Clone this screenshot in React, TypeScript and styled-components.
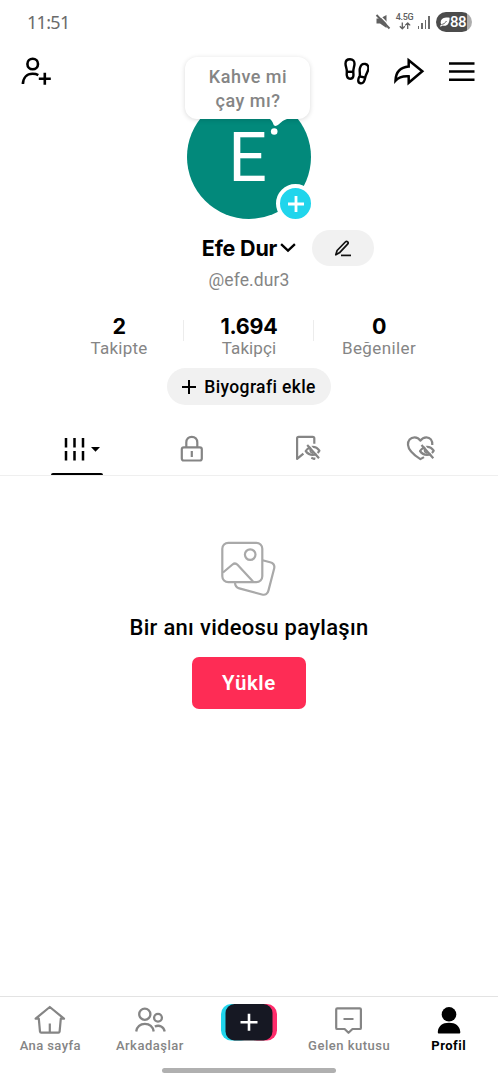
import React from "react";
import styled, { createGlobalStyle } from "styled-components";

const Global = createGlobalStyle`
  * { box-sizing: border-box; }
  body { margin: 0; background: #fff; }
  button { border: 0; padding: 0; font: inherit; color: inherit; background: none; }
  svg { display: block; flex: none; }
`;

const Screen = styled.div`
  width: 498px;
  height: 1080px;
  display: flex;
  flex-direction: column;
  background: #fff;
  color: #000;
  font-family: Roboto, "Noto Sans", sans-serif;
  overflow: hidden;
`;

const Label = styled.span<{ $size: number; $weight?: number; $color?: string; $track?: number; $line?: number }>`
  display: block;
  white-space: nowrap;
  font-size: ${(p) => p.$size}px;
  font-weight: ${(p) => p.$weight ?? 400};
  color: ${(p) => p.$color ?? "#000"};
  letter-spacing: ${(p) => p.$track ?? 0}px;
  line-height: ${(p) => p.$line ?? 24}px;
`;

const Strong = styled(Label)`
  font-family: Inter, Roboto, sans-serif;
`;

const StatusBar = styled.header`
  height: 44px;
  padding: 0 26px 1px 27px;
  display: flex;
  align-items: center;
  justify-content: space-between;
`;

const Clock = styled(Label)`
  font-family: "Noto Sans", sans-serif;
`;

const StatusIcons = styled.div`
  display: flex;
  align-items: center;
`;

const Network = styled.div`
  width: 18px;
  margin-left: 5px;
  display: flex;
  flex-direction: column;
  align-items: center;
`;

const Signal = styled.div`
  height: 13px;
  margin: 1px 0 0 4px;
  display: flex;
  align-items: flex-end;
  gap: 2px;
`;

const SignalBar = styled.i<{ $h: number }>`
  width: 1.6px;
  height: ${(p) => p.$h}px;
  background: #6b6b6b;
`;

const Battery = styled.div`
  width: 36px;
  height: 20px;
  margin-left: 6px;
  padding-left: 4px;
  display: flex;
  align-items: center;
  border-radius: 10px;
  background: linear-gradient(90deg, #4c4c4c 31px, #adadad 31px);
`;

const TopBar = styled.nav`
  height: 51px;
  padding: 4px 23px 0 21px;
  display: flex;
  align-items: center;
`;

const TopActions = styled.div`
  margin-left: auto;
  display: flex;
  align-items: center;
  gap: 24px;
`;

const Avatar = styled.div`
  position: relative;
  width: 124px;
  height: 124px;
  margin: 0 auto;
  border-radius: 50%;
  background: #02897b;
  display: flex;
  align-items: center;
  justify-content: center;
`;

const Initial = styled(Label)`
  padding: 1px 3px 0 0;
`;

const Bubble = styled.div`
  position: absolute;
  left: -2px;
  top: -38px;
  width: 125px;
  height: 62px;
  padding: 8px 0 0 1px;
  border-radius: 12px;
  background: #fff;
  text-align: center;
  box-shadow: 0 1px 5px rgba(0, 0, 0, 0.15);
`;

const BubbleTail = styled.svg`
  position: absolute;
  left: 80px;
  top: 24px;
`;

const AddBadge = styled.button`
  position: absolute;
  left: 89px;
  top: 89px;
  width: 39px;
  height: 39px;
  border: 4px solid #fff;
  border-radius: 50%;
  background: #20d5ec;
  display: flex;
  align-items: center;
  justify-content: center;
`;

const NameRow = styled.div`
  height: 36px;
  margin-top: 11px;
  display: grid;
  grid-template-columns: 1fr auto 1fr;
  align-items: center;
`;

const Name = styled.button`
  grid-column: 2;
  display: flex;
  align-items: center;
  gap: 3px;
`;

const Pill = styled.button<{ $w: number; $h: number }>`
  width: ${(p) => p.$w}px;
  height: ${(p) => p.$h}px;
  border-radius: 19px;
  background: #f1f1f1;
  display: flex;
  align-items: center;
  justify-content: center;
  gap: 8px;
`;

const EditPill = styled(Pill)`
  margin-left: 16px;
`;

const Handle = styled.div`
  height: 28px;
  display: flex;
  align-items: center;
  justify-content: center;
`;

const Stats = styled.div`
  height: 46px;
  margin-top: 20px;
  display: flex;
  justify-content: center;
`;

const Stat = styled.div`
  position: relative;
  width: 130px;
  display: flex;
  flex-direction: column;
  align-items: center;
  & + &::before {
    content: "";
    position: absolute;
    left: -1px;
    top: 6px;
    width: 1px;
    height: 21px;
    background: #ececec;
  }
`;

const BioRow = styled.div`
  margin-top: 8px;
  display: flex;
  justify-content: center;
`;

const Tabs = styled.div`
  height: 57px;
  margin-top: 14px;
  padding: 0 20px;
  border-bottom: 1px solid #efefef;
  display: grid;
  grid-template-columns: repeat(4, 1fr);
`;

const Tab = styled.button<{ $active?: boolean }>`
  position: relative;
  padding-top: 3px;
  display: flex;
  align-items: center;
  justify-content: center;
  &::after {
    content: "";
    display: ${(p) => (p.$active ? "block" : "none")};
    position: absolute;
    left: calc(50% - 26px);
    bottom: 0;
    width: 52px;
    height: 2.5px;
    border-radius: 2px 2px 0 0;
    background: #000;
  }
`;

const Empty = styled.main`
  flex: 1;
  padding-top: 64px;
  display: flex;
  flex-direction: column;
  align-items: center;
`;

const EmptyTitle = styled(Label)`
  margin-top: 16px;
`;

const Upload = styled.button`
  width: 114px;
  height: 52px;
  margin-top: 15px;
  border-radius: 7px;
  background: #fe2c55;
  display: flex;
  align-items: center;
  justify-content: center;
`;

const BottomNav = styled.nav`
  height: 84px;
  border-top: 1px solid #e3e3e3;
  display: flex;
  flex-direction: column;
  align-items: center;
`;

const NavItems = styled.div`
  width: 100%;
  height: 71px;
  display: grid;
  grid-template-columns: repeat(5, 1fr);
`;

const NavItem = styled.button`
  padding: 7px 0 0 1px;
  display: flex;
  flex-direction: column;
  align-items: center;
`;

const CreateItem = styled(NavItem)`
  padding-left: 0;
`;

const HomeBar = styled.div`
  width: 174px;
  height: 5px;
  border-radius: 3px;
  background: #b0b0b0;
`;

const line = { fill: "none", strokeLinecap: "butt", strokeLinejoin: "round" } as const;

const Mute = () => (
  <svg width="16" height="16" viewBox="373.500 14 16 16">
    <path d="M375 18.500h3.500l6.500-3.500v13l-6.500-4.500H375z" fill="#606060" />
    <path d="M376.700 14 389.500 27" stroke="#fff" strokeWidth="1.400" />
    <path d="M375 15 388 28.500" stroke="#606060" strokeWidth="1.900" />
  </svg>
);

const Arrows = () => (
  <svg width="12" height="8" viewBox="0 0 12 8" {...line} stroke="#606060" strokeWidth="1.300">
    <path d="M3.300.5v6M.8 4.200l2.500 2.500 2.500-2.500M8.700 7V1M6.200 3.400 8.700.9l2.500 2.500" />
  </svg>
);

const Leaf = () => (
  <svg width="10" height="10" viewBox="0 0 10 10">
    <path d="M9.600.7C5.500 0 .7 1.200.7 5.200c0 1.500.7 2.500 1.500 3.100C6.500 10.300 9.700 6.700 9.600.7z" fill="#fff" />
    <path d="M1.500 7.500C3.500 7.300 5.300 6 6.500 4" stroke="#4c4c4c" strokeWidth=".9" fill="none" />
    <path d="M.2 9.200 2.500 8" stroke="#fff" strokeWidth="1.200" />
  </svg>
);

const AddUser = () => (
  <svg width="32" height="30" viewBox="21.500 57 32 30" {...line} stroke="#000" strokeWidth="2.600">
    <circle cx="33.200" cy="64" r="5.300" />
    <path d="M23.400 84c.2-6.300 4-10.200 9.600-10.200 2.300 0 4.400.5 5.800 1.300" />
    <path d="M39.300 78.700h12M45.300 72.700v12" />
  </svg>
);

const Footprints = () => (
  <svg width="27" height="29" viewBox="343.500 57.500 27 29" {...line} stroke="#000" strokeWidth="2.400">
    <path d="M348.300 72.500c.5-3-1.400-5.200-1.300-8.500.1-3 1.700-4.200 4.500-4.200 3 0 4.600 1.700 4.500 4.700-.1 2.900-1.600 5.300-1.200 8.300.4 3.200.4 6.400-2.900 6.400-3.400 0-4-3.200-3.600-6.700z" />
    <path d="M348.400 72.300h6.300" />
    <path d="M361.200 76.300c.6-2.700-.5-4.800.2-7.600.8-3 2.800-4.700 5.400-4.200 2.700.5 3.600 3 2.900 5.900-.7 2.700-2.300 4.200-2.900 7.300-.7 3.600-1.900 6.700-4.900 6.100-3.100-.6-2.400-4.300-.7-7.500z" />
    <path d="m360.500 76.800 6.300 1.300" />
  </svg>
);

const Share = () => (
  <svg width="32" height="30" viewBox="393 57 32 30" {...line} strokeLinejoin="miter" stroke="#000" strokeWidth="2.500">
    <path d="M408.700 60.300 422.300 71.300 408.700 82.700V76.300c-6-.4-10 .7-13.200 4.300.3-8.200 4.800-13.300 13.200-14z" />
  </svg>
);

const Menu = () => (
  <svg width="26" height="20" viewBox="449 62 26 20" stroke="#000" strokeWidth="2.500">
    <path d="M449 63.400h25.500M449 71.600h25.500M449 79.800h25.500" />
  </svg>
);

const Plus = ({ size, color, width }: { size: number; color: string; width: number }) => (
  <svg width={size} height={size} viewBox={`0 0 ${size} ${size}`} stroke={color} strokeWidth={width}>
    <path d={`M0 ${size / 2}h${size}M${size / 2} 0v${size}`} />
  </svg>
);

const Chevron = () => (
  <svg width="16" height="10" viewBox="0 0 16 10" {...line} strokeLinejoin="miter" stroke="#000" strokeWidth="2.300">
    <path d="m1.100 1.200 6.900 6.500 6.900-6.500" />
  </svg>
);

const Pencil = () => (
  <svg width="18" height="17" viewBox="334 240 18 17" {...line} stroke="#111" strokeWidth="1.700">
    <path d="m335.800 254.800 1.300-4.300 8.200-8.500c.8-.8 1.700-.8 2.400-.2s.7 1.500-.1 2.300l-8.200 8.700z" />
    <path d="M341 255.400h10" />
  </svg>
);

const Grid = () => (
  <svg width="52" height="26" viewBox="51.500 435.500 52 26" stroke="#000" strokeWidth="2.500">
    <path d="M66.500 437.500v9.500M75 437.500v9.500M83.500 437.500v9.500M66.500 450.500v9.500M75 450.500v9.500M83.500 450.500v9.500" />
    <path d="M91.500 446.500h9l-4.500 4.700z" fill="#000" stroke="none" />
  </svg>
);

const Lock = () => (
  <svg width="24" height="28" viewBox="179.500 434.500 24 28" {...line} stroke="#858585" strokeWidth="2.200">
    <rect x="181.300" y="446.800" width="20" height="13.200" rx="2" />
    <path d="M185.800 446.500v-4.500c0-3.500 2.300-5.700 5.500-5.700s5.500 2.200 5.500 5.700v4.500M191.300 450.500v6" />
  </svg>
);

const HiddenEye = () => (
  <>
    <path d="M305.700 451.500c2-2.900 4.300-4.200 7-4.200s5 1.300 6.700 3.900c-1.600 2.900-3.900 4.200-6.700 4.200s-5.200-1.300-7-3.900z" strokeWidth="2.200" />
    <path d="M310.300 449c-.5 2.500.7 4.300 3 4.800" strokeWidth="1.800" />
    <path d="m308.800 444.500 11 12.500" stroke="#fff" strokeWidth="1.200" />
    <path d="m307.200 445.500 11.800 13.300" strokeWidth="2.200" />
  </>
);

const SavedHidden = () => (
  <svg width="30" height="27" viewBox="291 435.500 30 27" {...line} stroke="#858585" strokeWidth="2.200">
    <path d="M314.300 444.300v-5.500c0-1-.6-1.500-1.600-1.500h-14c-1 0-1.600.5-1.600 1.500v20.600l6.300-5.300" />
    <path d="m311.300 458.200 3 1.200v-1.500" />
    <HiddenEye />
  </svg>
);

const LikedHidden = () => (
  <svg width="29" height="27" viewBox="406 435.500 29 27" {...line} stroke="#858585" strokeWidth="2.200">
    <path d="M432.300 445.500c.3-4.600-2.100-7.700-5.900-7.700-2.500 0-4.500 1.100-6 3.400-1.400-2.300-3.300-3.400-5.800-3.400-4.200 0-6.900 3.300-6.600 7.500.3 5 4.500 9.300 12.400 14.300l3.600-2" />
    <g transform="translate(114.300 0)">
      <HiddenEye />
    </g>
  </svg>
);

const Photos = () => (
  <svg width="58" height="58" viewBox="220 540 58 58" {...line} stroke="#a9a9a9" strokeWidth="2.200">
    <rect x="222.300" y="542.800" width="40" height="39.400" rx="6" />
    <circle cx="250.200" cy="554.600" r="5.300" />
    <path d="M223 572.500l9.500-8c1.800-1.400 3.500-1.300 5 .3L253 581.500" />
    <path d="m262.500 560.200 7.600 2c3.400.9 4.900 3.100 4 6.600l-5.600 21.600c-.9 3.600-3.100 5-6.600 4.100l-22.600-6.100c-2.900-.8-4.300-2.900-4.300-6.200" />
  </svg>
);

const Home = () => (
  <svg width="32" height="30" viewBox="34 1004 32 30" {...line} stroke="#858585" strokeWidth="2.200">
    <path d="M49.800 1007 64 1018.700h-3.200l-1.200 12.900c-.1.700-.5 1-1.200 1H41.200c-.7 0-1.100-.3-1.200-1l-1.200-12.900h-3.200zM49.800 1023.500v9" />
  </svg>
);

const Friends = () => (
  <svg width="34" height="30" viewBox="132.500 1004 34 30" {...line} stroke="#858585" strokeWidth="2.300">
    <circle cx="144.300" cy="1014.200" r="5.600" />
    <path d="M135.700 1031.500c.9-5 4.100-7.600 8.700-7.600s7.900 2.600 8.800 7.600" />
    <circle cx="157.500" cy="1017.700" r="3.900" />
    <path d="M154.300 1026.500c4.700-2 9 .2 9.900 5" />
  </svg>
);

const Create = () => (
  <svg width="56" height="38" viewBox="0 0 56 38">
    <rect x="0" y="0" width="30" height="36.500" rx="10" fill="#20d5ec" />
    <rect x="26" y="0" width="30" height="36.500" rx="10" fill="#fe2c6b" />
    <rect x="4.500" y="0" width="47" height="36.500" rx="9" fill="#161823" />
    <path d="M19.500 18.300h17M28 9.800v17" stroke="#fff" strokeWidth="2.600" />
  </svg>
);

const Inbox = () => (
  <svg width="28" height="30" viewBox="335 1004 28 30" {...line} stroke="#858585" strokeWidth="2.200">
    <path d="M337.300 1008.300h22.500c.7 0 1.100.4 1.100 1.100v18.500c0 .7-.4 1.100-1.100 1.100h-7.300l-4 3.800-3.900-3.800h-7.300c-.7 0-1.100-.4-1.100-1.100v-18.500c0-.7.4-1.100 1.100-1.100zM343.500 1019h10" />
  </svg>
);

const Profile = () => (
  <svg width="24" height="30" viewBox="436 1004 24 30">
    <circle cx="448" cy="1014.300" r="7.300" />
    <path d="M436.800 1032c.4-6 4.700-9.200 11.200-9.200s10.900 3.200 11.300 9.200c0 1-.4 1.500-1.300 1.500h-19.900c-.9 0-1.300-.5-1.300-1.500z" />
  </svg>
);

const stats = [
  { value: "2", label: "Takipte", track: 0.25 },
  { value: "1.694", label: "Takipçi", track: 0.1 },
  { value: "0", label: "Beğeniler", track: 0.4 },
];

export default function App() {
  return (
    <Screen>
      <Global />
      <StatusBar>
        <Clock $size={18} $color="#6b6b6b" $track={-0.7}>11:51</Clock>
        <StatusIcons>
          <Mute />
          <Network>
            <Label $size={9} $weight={500} $color="#606060" $line={9} $track={-0.3}>4.5G</Label>
            <Arrows />
          </Network>
          <Signal>
            {[3, 6, 9, 13].map((h) => <SignalBar key={h} $h={h} />)}
          </Signal>
          <Battery>
            <Leaf />
            <Label $size={15} $weight={500} $color="#fff" $line={20} $track={-0.5}>88</Label>
          </Battery>
        </StatusIcons>
      </StatusBar>
      <TopBar>
        <AddUser />
        <TopActions>
          <Footprints />
          <Share />
          <Menu />
        </TopActions>
      </TopBar>
      <Avatar>
        <Initial $size={68} $color="#fff" $line={68}>E</Initial>
        <Bubble>
          <Label $size={18} $weight={500} $color="#858585" $track={0.5}>Kahve mi</Label>
          <Label $size={18} $weight={500} $color="#858585" $track={0.5}>çay mı?</Label>
        </Bubble>
        <BubbleTail width="22" height="18" viewBox="0 0 22 18" fill="#fff">
          <path d="M3 0c2 1.500 2.500 3 3.500 5.500.6 1.500 2 1.800 3.500 1C13.500 4.700 14.500 1.500 20 0z" />
          <circle cx="7.200" cy="12.500" r="3.300" />
        </BubbleTail>
        <AddBadge><Plus size={16} color="#fff" width={2.8} /></AddBadge>
      </Avatar>
      <NameRow>
        <Name>
          <Strong $size={21.5} $weight={700} $track={-0.2}>Efe Dur</Strong>
          <Chevron />
        </Name>
        <EditPill $w={62} $h={36}><Pencil /></EditPill>
      </NameRow>
      <Handle><Label $size={17.5} $color="#858585" $track={0.1}>@efe.dur3</Label></Handle>
      <Stats>
        {stats.map((s) => (
          <Stat key={s.label}>
            <Strong $size={21.5} $weight={700} $track={-0.3}>{s.value}</Strong>
            <Label $size={17} $color="#858585" $track={s.track} $line={20}>{s.label}</Label>
          </Stat>
        ))}
      </Stats>
      <BioRow>
        <Pill $w={164} $h={37}>
          <Plus size={14} color="#000" width={2} />
          <Label $size={17.5} $weight={500} $track={0.35}>Biyografi ekle</Label>
        </Pill>
      </BioRow>
      <Tabs>
        <Tab $active><Grid /></Tab>
        <Tab><Lock /></Tab>
        <Tab><SavedHidden /></Tab>
        <Tab><LikedHidden /></Tab>
      </Tabs>
      <Empty>
        <Photos />
        <EmptyTitle $size={22} $weight={500} $line={28} $track={0.3}>Bir anı videosu paylaşın</EmptyTitle>
        <Upload><Label $size={20.5} $weight={600} $color="#fff" $track={0.6}>Yükle</Label></Upload>
      </Empty>
      <BottomNav>
        <NavItems>
          <NavItem><Home /><Label $size={13} $weight={500} $color="#858585" $track={0.4}>Ana sayfa</Label></NavItem>
          <NavItem><Friends /><Label $size={13} $weight={500} $color="#858585" $track={0.5}>Arkadaşlar</Label></NavItem>
          <CreateItem><Create /></CreateItem>
          <NavItem><Inbox /><Label $size={13} $weight={500} $color="#858585" $track={0.5}>Gelen kutusu</Label></NavItem>
          <NavItem><Profile /><Label $size={13} $weight={700} $track={0.5}>Profil</Label></NavItem>
        </NavItems>
        <HomeBar />
      </BottomNav>
    </Screen>
  );
}
